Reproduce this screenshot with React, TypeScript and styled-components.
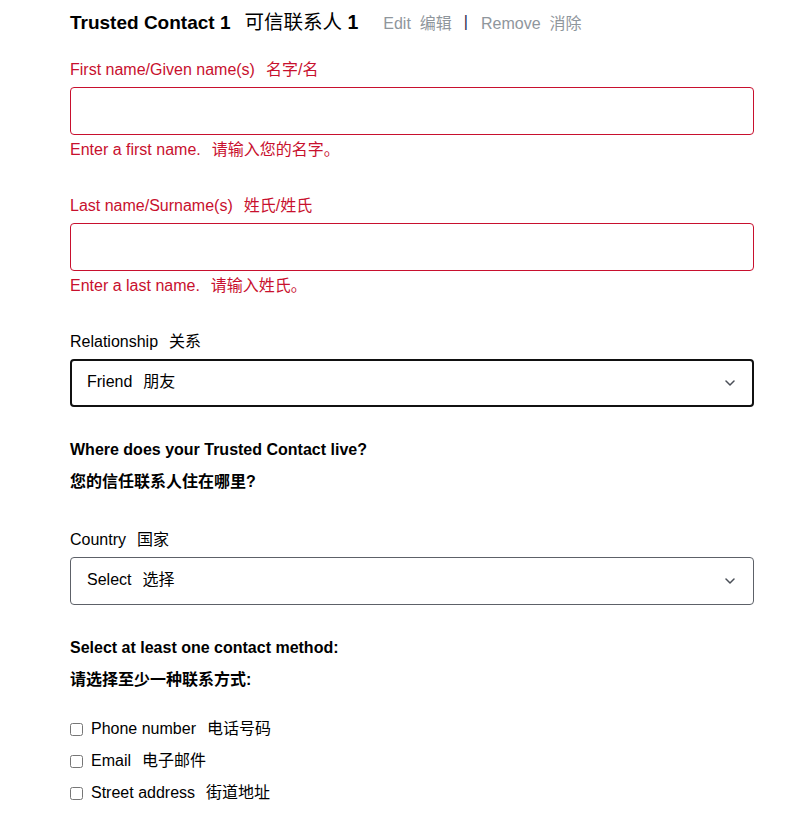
import React from "react";
import styled, { createGlobalStyle } from "styled-components";

const GlobalStyle = createGlobalStyle`
    body {
        margin: 0;
        background: #ffffff;
        font-family: "Liberation Sans", Arial, "Noto Sans CJK SC", sans-serif;
        color: #000000;
    }
`

const Page = styled.div`
    width: 684px;
    padding: 8px 0 0 70px;
    display: flex;
    flex-direction: column;
`

const TitleRow = styled.div`
    display: flex;
    align-items: center;
    height: 28px;
`

const Title = styled.h2`
    margin: 0;
    font-size: 19px;
    font-weight: 700;
    line-height: 28px;
`

const TitleCn = styled.span`
    font-weight: 400;
    font-size: 19.5px;
    margin-left: 14px;
`

const TitleNum = styled.span`
    font-weight: 700;
`

const Actions = styled.div`
    display: flex;
    align-items: center;
    margin-left: 25px;
    font-size: 16px;
    color: #8f969c;
`

const Action = styled.span`
    cursor: pointer;
`

const Divider = styled.span`
    color: #1f2b4d;
    margin: 0 13px 0 12px;
`

const Field = styled.div<{ $top: number }>`
    display: flex;
    flex-direction: column;
    margin-top: ${(p) => p.$top}px;
`

const Label = styled.label<{ $error?: boolean }>`
    font-size: 16px;
    line-height: 24px;
    color: ${(p) => (p.$error ? "#c8102e" : "#000000")};
    margin-bottom: 5px;
`

const Cn = styled.span<{ $gap?: number }>`
    margin-left: ${(p) => p.$gap ?? 11}px;
`

const TextInput = styled.input<{ $error?: boolean }>`
    box-sizing: border-box;
    width: 100%;
    height: 48px;
    border: 1px solid ${(p) => (p.$error ? "#c8102e" : "#5d6168")};
    border-radius: 4px;
    padding: 0 16px;
    font-size: 16px;
    font-family: inherit;
    outline: none;
`

const ErrorText = styled.div`
    font-size: 16px;
    line-height: 24px;
    color: #c8102e;
    margin-top: 3px;
`

const SelectBox = styled.div<{ $focused?: boolean }>`
    box-sizing: border-box;
    height: 48px;
    display: flex;
    align-items: center;
    justify-content: space-between;
    padding: 0 ${(p) => (p.$focused ? 15 : 16)}px;
    border: ${(p) => (p.$focused ? "2px solid #111111" : "1px solid #5d6168")};
    border-radius: 4px;
    font-size: 16px;
    line-height: 24px;
`

const SelectValue = styled.span`
    margin-top: -2px;
`

const Chevron = () => (
    <svg width="10" height="6" viewBox="0 0 10 6" style={{ marginRight: 2 }}>
        <path d="M1 1l4 4 4-4" fill="none" stroke="#4a4f57" strokeWidth="1.5" strokeLinecap="round" strokeLinejoin="round" />
    </svg>
)

const Heading = styled.div<{ $top: number }>`
    margin-top: ${(p) => p.$top}px;
    font-size: 16px;
    font-weight: 700;
    line-height: 24px;
`

const CheckList = styled.div`
    display: flex;
    flex-direction: column;
    gap: 8px;
    margin-top: 25px;
`

const CheckRow = styled.label`
    display: flex;
    align-items: center;
    gap: 8px;
    font-size: 16px;
    line-height: 24px;
`

const Box = styled.input`
    width: 13px;
    height: 13px;
    margin: 0;
`

const App: React.FC = () => {
    return (
        <>
            <GlobalStyle />
            <Page>
                <TitleRow>
                    <Title>
                        Trusted Contact 1<TitleCn>可信联系人 <TitleNum>1</TitleNum></TitleCn>
                    </Title>
                    <Actions>
                        <Action>Edit<Cn $gap={9}>编辑</Cn></Action>
                        <Divider>|</Divider>
                        <Action>Remove<Cn $gap={9}>消除</Cn></Action>
                    </Actions>
                </TitleRow>

                <Field $top={22}>
                    <Label $error>First name/Given name(s)<Cn>名字/名</Cn></Label>
                    <TextInput $error type="text" />
                    <ErrorText>Enter a first name.<Cn>请输入您的名字。</Cn></ErrorText>
                </Field>

                <Field $top={32}>
                    <Label $error>Last name/Surname(s)<Cn>姓氏/姓氏</Cn></Label>
                    <TextInput $error type="text" />
                    <ErrorText>Enter a last name.<Cn>请输入姓氏。</Cn></ErrorText>
                </Field>

                <Field $top={32}>
                    <Label>Relationship<Cn>关系</Cn></Label>
                    <SelectBox $focused>
                        <SelectValue>Friend<Cn>朋友</Cn></SelectValue>
                        <Chevron />
                    </SelectBox>
                </Field>

                <Heading $top={31}>Where does your Trusted Contact live?</Heading>
                <Heading $top={8}>您的信任联系人住在哪里?</Heading>

                <Field $top={34}>
                    <Label>Country<Cn>国家</Cn></Label>
                    <SelectBox>
                        <SelectValue>Select<Cn>选择</Cn></SelectValue>
                        <Chevron />
                    </SelectBox>
                </Field>

                <Heading $top={31}>Select at least one contact method:</Heading>
                <Heading $top={8}>请选择至少一种联系方式:</Heading>

                <CheckList>
                    <CheckRow><Box type="checkbox" /><span>Phone number<Cn>电话号码</Cn></span></CheckRow>
                    <CheckRow><Box type="checkbox" /><span>Email<Cn>电子邮件</Cn></span></CheckRow>
                    <CheckRow><Box type="checkbox" /><span>Street address<Cn>街道地址</Cn></span></CheckRow>
                </CheckList>
            </Page>
        </>
    );
};

export default App;
